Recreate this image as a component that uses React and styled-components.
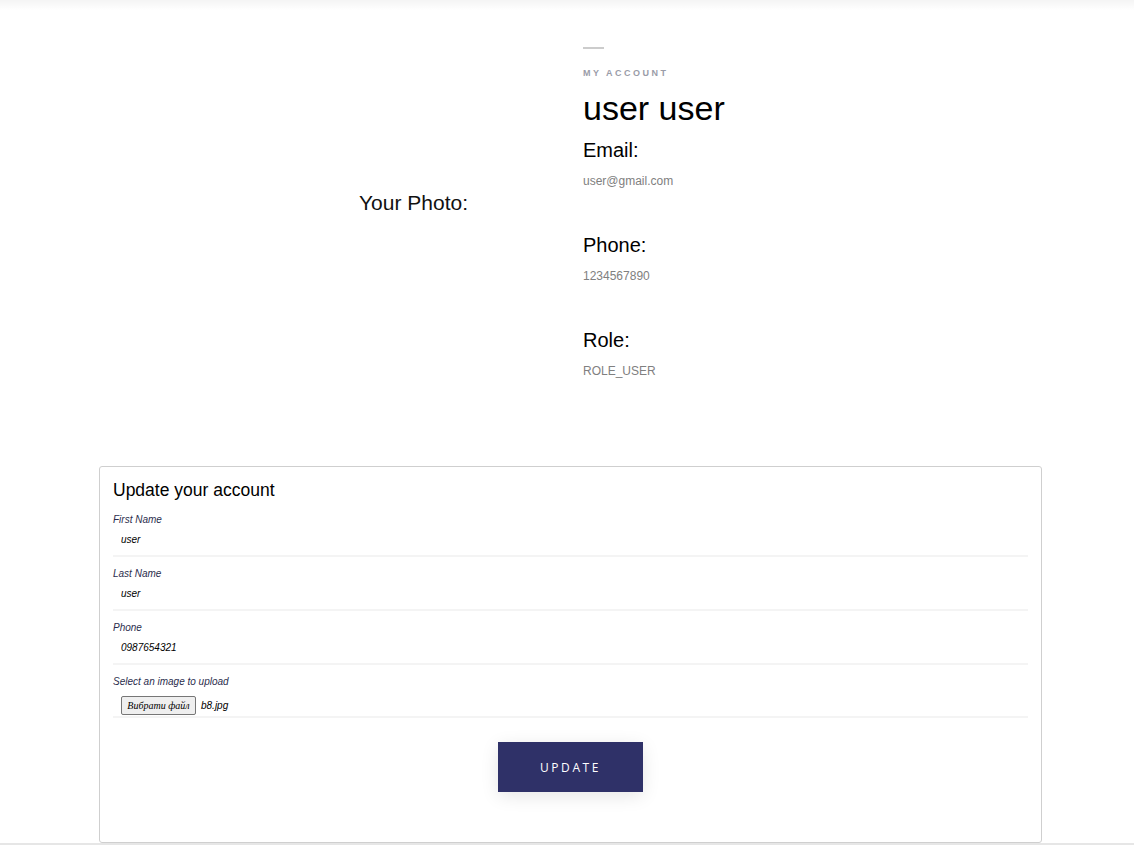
import React from 'react';
import styled, { createGlobalStyle } from 'styled-components';

const GlobalStyle = createGlobalStyle`
	html, body {
		margin: 0;
		padding: 0;
		background: #fff;
		font-family: 'Liberation Sans', Arial, sans-serif;
	}
`;

const App = () => {
	return (
		<>
			<GlobalStyle />
			<Page>
				<TopShadow />
				<Profile>
					<PhotoColumn>
						<PhotoLabel>Your Photo:</PhotoLabel>
					</PhotoColumn>
					<InfoColumn>
						<Dash />
						<Eyebrow>My account</Eyebrow>
						<Name>user user</Name>
						<Details>
							<Field>
								<FieldTitle>Email:</FieldTitle>
								<FieldValue>user@gmail.com</FieldValue>
							</Field>
							<Field>
								<FieldTitle>Phone:</FieldTitle>
								<FieldValue>1234567890</FieldValue>
							</Field>
							<Field>
								<FieldTitle>Role:</FieldTitle>
								<FieldValue>ROLE_USER</FieldValue>
							</Field>
						</Details>
					</InfoColumn>
				</Profile>
				<Card>
					<CardTitle>Update your account</CardTitle>
					<FormRow>
						<Label>First Name</Label>
						<Input defaultValue="user" />
					</FormRow>
					<FormRow>
						<Label>Last Name</Label>
						<Input defaultValue="user" />
					</FormRow>
					<FormRow>
						<Label>Phone</Label>
						<Input defaultValue="0987654321" />
					</FormRow>
					<FormRow $file>
						<Label>Select an image to upload</Label>
						<FileLine>
							<FileButton type="button">Вибрати файл</FileButton>
							<FileName>b8.jpg</FileName>
						</FileLine>
					</FormRow>
					<ButtonWrap>
						<UpdateButton type="button">Update</UpdateButton>
					</ButtonWrap>
				</Card>
				<Footer />
			</Page>
		</>
	);
};

export default App;

const Page = styled.div`
	min-height: 847px;
	display: flex;
	flex-direction: column;
`;

const TopShadow = styled.div`
	height: 10px;
	background: linear-gradient(to bottom, rgba(0, 0, 0, 0.045), rgba(0, 0, 0, 0));
`;

const Profile = styled.div`
	display: grid;
	grid-template-columns: 567px 1fr;
	padding-top: 37px;
	height: 419px;
	box-sizing: border-box;
`;

const PhotoColumn = styled.div`
	display: flex;
	justify-content: flex-end;
	padding-right: 99px;
	padding-top: 145px;
`;

const PhotoLabel = styled.div`
	font-size: 21px;
	color: #111;
	line-height: 1;
	height: 21px;
`;

const InfoColumn = styled.div`
	padding-left: 16px;
	display: flex;
	flex-direction: column;
`;

const Dash = styled.div`
	width: 21px;
	height: 2px;
	background: #cccccc;
	margin-bottom: 19px;
`;

const Eyebrow = styled.div`
	font-size: 9px;
	font-weight: bold;
	letter-spacing: 2.5px;
	text-transform: uppercase;
	color: #9a9ca8;
	line-height: 10px;
`;

const Name = styled.h1`
	margin: 11px 0 0;
	font-size: 34px;
	font-weight: normal;
	color: #000;
	line-height: 38px;
`;

const Details = styled.div`
	margin-top: 10px;
`;

const Field = styled.div`
	height: 95px;
`;

const FieldTitle = styled.h3`
	margin: 0;
	font-size: 20px;
	font-weight: normal;
	color: #000;
	line-height: 26px;
`;

const FieldValue = styled.p`
	margin: 11px 0 0;
	font-size: 12px;
	color: #808080;
	line-height: 14px;
`;

const Card = styled.div`
	margin: 37px 92px 0 99px;
	border: 1px solid #cfcfcf;
	border-radius: 3px;
	padding: 13px 13px 49px 13px;
	height: 377px;
	box-sizing: border-box;
`;

const CardTitle = styled.h2`
	margin: 0 0 3px;
	font-size: 17.5px;
	font-weight: normal;
	color: #000;
	line-height: 20px;
`;

const FormRow = styled.div`
	border-bottom: 2px solid #f4f4f4;
	padding-top: 11px;
	padding-bottom: ${(p) => (p.$file ? '1px' : '9px')};
`;

const Label = styled.label`
	display: block;
	font-size: 10px;
	font-style: italic;
	color: #2b2d4d;
	line-height: 12px;
`;

const Input = styled.input`
	display: block;
	border: none;
	outline: none;
	width: 100%;
	box-sizing: border-box;
	padding: 0 8px;
	margin: 6px 0 0;
	font-family: 'Liberation Sans', Arial, sans-serif;
	font-size: 10px;
	font-style: italic;
	color: #000;
	height: 14px;
	background: transparent;
`;

const FileLine = styled.div`
	display: flex;
	align-items: center;
	gap: 5px;
	padding-left: 8px;
	margin-top: 8px;
`;

const FileButton = styled.button`
	font-family: 'Liberation Serif', 'Times New Roman', serif;
	font-style: italic;
	font-size: 10px;
	color: #000;
	background: #efefef;
	border: 1px solid #767676;
	border-radius: 2px;
	padding: 0 5px;
	width: 75px;
	height: 19px;
`;

const FileName = styled.span`
	font-size: 10px;
	font-style: italic;
	color: #000;
`;

const ButtonWrap = styled.div`
	display: flex;
	justify-content: center;
	margin-top: 24px;
`;

const UpdateButton = styled.button`
	width: 145px;
	height: 50px;
	border: none;
	background: #2f3168;
	color: #fff;
	font-family: 'Open Sans', 'Liberation Sans', sans-serif;
	font-size: 12px;
	letter-spacing: 2.6px;
	text-transform: uppercase;
	box-shadow: 0 4px 18px rgba(0, 0, 0, 0.1);
	cursor: pointer;
`;

const Footer = styled.div`
	border-top: 2px solid #e6e6e6;
	height: 4px;
`;
